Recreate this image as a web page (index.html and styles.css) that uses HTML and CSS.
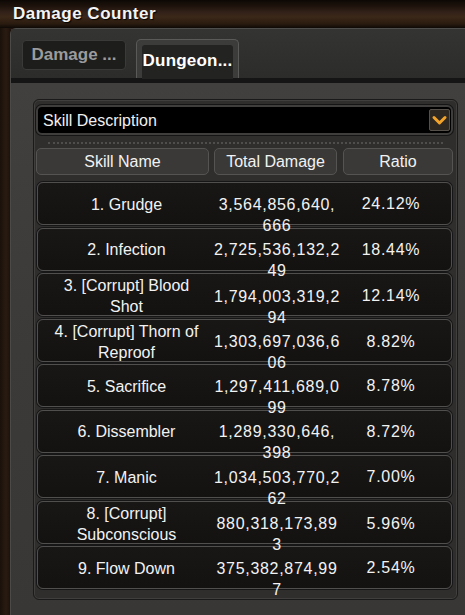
FILE: index.html
```html
<!DOCTYPE html>
<html>
<head>
<meta charset="utf-8">
<link rel="stylesheet" href="styles.css">
</head>
<body>
<div class="title">Damage Counter</div>
<div class="window">
  <div class="tabs">
    <div class="tab">Damage ...</div>
    <div class="tab active"><span>Dungeon...</span></div>
  </div>
  <div class="content">
    <div class="inner">
      <div class="select">
        <span class="select-text">Skill Description</span>
        <span class="chev"><svg width="19" height="20" viewBox="0 0 19 20"><path d="M4 7.5 L9.5 13 L15 7.5" fill="none" stroke="#f2a42a" stroke-width="3" stroke-linecap="round" stroke-linejoin="round"/></svg></span>
      </div>
      <div class="dots"></div>
      <div class="head">
        <div class="hcell">Skill Name</div>
        <div class="hcell">Total Damage</div>
        <div class="hcell">Ratio</div>
      </div>
      <div class="rows">
        <div class="row"><div class="name">1. Grudge</div><div class="dmg"><span>3,564,856,640,<br>666</span></div><div class="ratio">24.12%</div></div>
        <div class="row"><div class="name">2. Infection</div><div class="dmg"><span>2,725,536,132,2<br>49</span></div><div class="ratio">18.44%</div></div>
        <div class="row"><div class="name">3. [Corrupt] Blood<br>Shot</div><div class="dmg"><span>1,794,003,319,2<br>94</span></div><div class="ratio">12.14%</div></div>
        <div class="row"><div class="name">4. [Corrupt] Thorn of<br>Reproof</div><div class="dmg"><span>1,303,697,036,6<br>06</span></div><div class="ratio">8.82%</div></div>
        <div class="row"><div class="name">5. Sacrifice</div><div class="dmg"><span>1,297,411,689,0<br>99</span></div><div class="ratio">8.78%</div></div>
        <div class="row"><div class="name">6. Dissembler</div><div class="dmg"><span>1,289,330,646,<br>398</span></div><div class="ratio">8.72%</div></div>
        <div class="row"><div class="name">7. Manic</div><div class="dmg"><span>1,034,503,770,2<br>62</span></div><div class="ratio">7.00%</div></div>
        <div class="row"><div class="name">8. [Corrupt]<br>Subconscious</div><div class="dmg"><span>880,318,173,89<br>3</span></div><div class="ratio">5.96%</div></div>
        <div class="row"><div class="name">9. Flow Down</div><div class="dmg"><span>375,382,874,99<br>7</span></div><div class="ratio">2.54%</div></div>
      </div>
    </div>
  </div>
</div>
</body>
</html>
```
FILE: styles.css
```css
html, body {
  margin: 0;
  padding: 0;
}
body {
  width: 465px;
  height: 615px;
  overflow: hidden;
  background: linear-gradient(90deg, #1a110b 0, #2a1b11 6px, #1d130c 10px);
  font-family: "Liberation Sans", Arial, sans-serif;
  color: #f2f2f2;
}
.title {
  height: 28px;
  line-height: 27px;
  padding-left: 13px;
  font-size: 17px;
  font-weight: bold;
  letter-spacing: 0.5px;
  color: #f4f4f4;
  text-shadow: 1px 1px 1px #000;
  background: linear-gradient(180deg, #0d0805 0, #1c120b 20%, #33221a 45%, #3b2818 60%, #2a1b10 85%, #0e0906 100%);
}
.window {
  margin-left: 10px;
  height: 586px;
  background: #2d2d2c;
  border-top: 1px solid #4e4e4d;
  border-left: 1px solid #4a4a49;
  border-radius: 6px 0 0 0;
  display: flex;
  flex-direction: column;
}
.tabs {
  height: 49px;
  display: flex;
  align-items: flex-start;
  gap: 10px;
  padding-left: 11px;
  border-bottom: 5px solid #151515;
  box-sizing: content-box;
  background: linear-gradient(180deg, #343433 0, #2c2c2b 100%);
}
.tab {
  margin-top: 11px;
  width: 104px;
  height: 30px;
  box-sizing: border-box;
  background: #1d1d1c;
  border: 1px solid #3a3a39;
  border-radius: 4px;
  color: #9b9b9b;
  font-size: 17px;
  font-weight: bold;
  line-height: 28px;
  text-align: center;
}
.tab.active {
  margin-top: 10px;
  width: 103px;
  height: 39px;
  padding: 5px 5px 0;
  background: #3c3c3b;
  border: 1px solid #5a5a59;
  border-bottom: none;
  border-radius: 5px 5px 0 0;
  color: #ffffff;
}
.tab.active span {
  display: block;
  height: 34px;
  line-height: 31px;
  background: #232322;
  border-radius: 3px 3px 0 0;
  letter-spacing: 0.2px;
}
.content {
  flex: 1;
  background: linear-gradient(180deg, #41403e 0, #3b3a38 50%, #383735 100%);
  padding: 16px 7px 15px 22px;
  display: flex;
  flex-direction: column;
}
.inner {
  flex: 1;
  background: #2f2e2d;
  border: 1px solid #1a1a1a;
  box-shadow: inset 0 0 0 1px #403f3d;
  border-radius: 6px;
  padding: 5px 4px 0 2px;
}
.select {
  height: 30px;
  box-sizing: border-box;
  background: #000;
  border: 2px solid #3f3e3d;
  border-radius: 6px;
  box-shadow: 0 0 0 1px #151515;
  display: flex;
  align-items: center;
  justify-content: space-between;
  padding-left: 5px;
  padding-right: 1px;
}
.select-text {
  font-size: 16px;
  color: #f0f0f0;
  padding-top: 1px;
}
.chev {
  width: 21px;
  height: 22px;
  box-sizing: border-box;
  background: #2e2822;
  border: 1px solid #56504a;
  border-radius: 2px;
  display: flex;
  align-items: center;
  justify-content: center;
}
.dots {
  margin: 7px 10px 0 12px;
  height: 0;
  border-top: 2px dotted #4f4e4c;
}
.head {
  margin-top: 4px;
  display: grid;
  grid-template-columns: 173px 123px 111px;
  column-gap: 5px;
}
.hcell {
  height: 27px;
  box-sizing: border-box;
  background: #3a3938;
  border: 1px solid #555453;
  border-radius: 5px;
  text-align: center;
  line-height: 26px;
  font-size: 16px;
  color: #f2f2f2;
}
.head .hcell:last-child {
  margin-left: 1px;
}
.rows {
  margin-top: 7px;
  margin-left: 1px;
  width: 415px;
  display: flex;
  flex-direction: column;
  gap: 2.5px;
}
.row {
  height: 43px;
  box-sizing: border-box;
  background: linear-gradient(180deg, #181716 0, #131211 100%);
  border: 1px solid #514f4d;
  border-radius: 6px;
  box-shadow: 0 0 0 1px #161616;
  display: grid;
  grid-template-columns: 177px 124px 104px;
  align-items: center;
  font-size: 16px;
  padding-top: 1px;
}
.name {
  text-align: center;
  line-height: 21px;
}
.dmg {
  display: flex;
  justify-content: center;
  align-items: center;
  height: 21px;
}
.dmg span {
  display: block;
  height: 21px;
  line-height: 21px;
  text-align: center;
  letter-spacing: 0.7px;
  position: relative;
  z-index: 1;
  white-space: nowrap;
}
.ratio {
  text-align: center;
  letter-spacing: 0.7px;
}
```
